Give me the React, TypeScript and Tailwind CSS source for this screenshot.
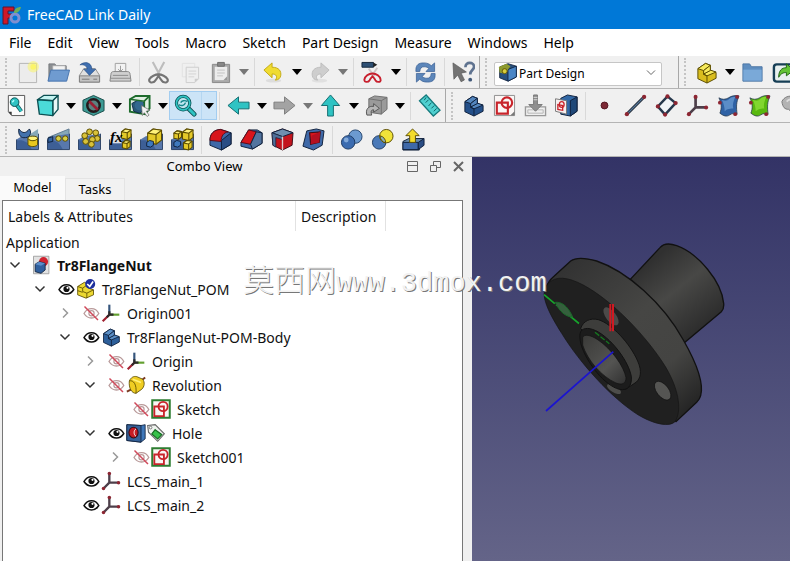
import type { ReactNode } from "react"

interface SvgProps {
  children: ReactNode
  size?: "md" | "sm"
}

function Svg({ children, size = "md" }: SvgProps) {
  return (
    <svg viewBox="0 0 24 24" className={size === "md" ? "size-[23px]" : "size-5"} aria-hidden="true">
      {children}
    </svg>
  )
}

const BLUE = "#3f69a8"
const NAVY = "#10203c"
const TEAL = "#2fc3c3"
const TEAL_DARK = "#0b4f52"
const YELLOW = "#f0dc32"
const OLIVE = "#5a4b00"
const RED = "#d8151c"

/* ---- file toolbar ---- */

const NewIcon = () => (
  <Svg>
    <path d="M3.500 2.500h18v20h-18z" fill="#ececec" stroke="#b5b5b5" />
    <circle cx="18" cy="6" r="6" fill="#fbf56a" opacity=".55" />
    <circle cx="18" cy="6" r="3" fill="#fbf56a" />
  </Svg>
)

const OpenIcon = () => (
  <Svg>
    <path d="M2 21V3h6l2 2h10v14" fill="#8c8f93" stroke="#75787c" />
    <path d="M6 5h13v8H6z" fill="#f2f2f2" stroke="#aaa" strokeWidth=".7" />
    <path d="M1 21 4 9.500h19.500L20.500 21z" fill="#6f9bd0" stroke="#4774ae" />
  </Svg>
)

const SaveIcon = () => (
  <Svg>
    <path d="M1.500 15 6 8h12l4.500 7v7h-21z" fill="#e0e0e0" stroke="#909090" />
    <path d="M1.500 15.500h21v6.500h-21z" fill="#c4c4c4" stroke="#808080" />
    <path d="M4 19h8M16 19h4" stroke="#777" />
    <path d="M2 4c5-4 12-3 12.500 4.500h4L12 15 6 8.500h3.500C9.500 5 6 3.500 2 4z" fill="#3f6fb0" stroke="#234a80" strokeWidth=".6" />
  </Svg>
)

const PrintIcon = () => (
  <Svg>
    <path d="M6.500 2.500h11v10h-11z" fill="#f2f2f2" stroke="#a0a0a0" />
    <path d="M12 5v6M9.500 8.500 12 11l2.500-2.500" stroke="#999" fill="none" />
    <path d="M2 14c0-2 1-3 3-3h14c2 0 3 1 3 3l1 7H1z" fill="#cfcfcf" stroke="#858585" />
    <path d="M4 15h16M1.500 18h21" stroke="#8a8a8a" />
  </Svg>
)

const CutIcon = () => (
  <Svg>
    <path d="M6 1l8 15M18 1l-8 15" stroke="#bdbdbd" strokeWidth="2.200" />
    <path d="M12 14c-3 0-8 2-9.500 5-1 3 2 4 4.500 3 2-1.500 3-4 5-6 2 2 3 4.500 5 6 2.500 1 5.500 0 4.500-3-1.500-3-6.500-5-9.500-5z" fill="none" stroke="#747474" strokeWidth="2.200" />
  </Svg>
)

const CopyIcon = () => (
  <Svg>
    <path d="M4.500 2.500h13v14h-13z" fill="#f0f0f0" stroke="#e2e2e2" />
    <path d="M8.500 6.500h13v12l-4 4h-9z" fill="#efefef" stroke="#cdcdcd" />
    <path d="M11 10.500h8M11 13.500h8M11 16.500h6" stroke="#d2d2d2" />
    <path d="M21.500 18.500h-4v4z" fill="#ccc" />
  </Svg>
)

const PasteIcon = () => (
  <Svg>
    <path d="M3.500 3.500h18v19h-18z" fill="#a9a9a9" stroke="#8a8a8a" />
    <path d="M6 6h13v14H6z" fill="#ececec" />
    <path d="M9 1.500h7v4H9z" fill="#888" stroke="#6d6d6d" />
    <path d="M8.500 9.500h8M8.500 12.500h8M8.500 15.500h6" stroke="#c2c2c2" />
    <path d="M19 16v4h-4z" fill="#999" />
  </Svg>
)

const UndoIcon = () => (
  <Svg>
    <ellipse cx="12" cy="20.500" rx="8" ry="2" fill="#ddd" />
    <path d="M2 9.500 10.500 2v4.500c7 0 10 4 9 9-.6 2.500-2 4-5.500 4.500 2.500-3.500 1-6.500-3.500-6.500v4z" fill={YELLOW} stroke="#c2a914" />
  </Svg>
)

const RedoIcon = () => (
  <Svg>
    <ellipse cx="12" cy="20.500" rx="8" ry="2" fill="#e0e0e0" />
    <path d="M22 9.500 13.500 2v4.500c-7 0-10 4-9 9 .6 2.500 2 4 5.500 4.500-2.500-3.500-1-6.500 3.500-6.500v4z" fill="#cecece" stroke="#bcbcbc" />
  </Svg>
)

const CutLinkIcon = () => (
  <Svg>
    <path d="M1 1.500h12v5H1z" fill="#2d4f73" stroke="#14263a" />
    <path d="M13 1.500l4 2.500-4 2.500z" fill="#222" />
    <path d="M8 8l6 8M17 7l-6 9" stroke="#cfc6c6" strokeWidth="2" />
    <path d="M12 13c-4 0-8 3-8.500 6.500-.2 3 4 3 5.500.5 1-2 2-3 3-4 1 1 2 2 3 4 1.500 2.500 6 2.500 5.500-.5C20 16 16 13 12 13z" fill="none" stroke="#c81f2d" strokeWidth="2" />
  </Svg>
)

const RefreshIcon = () => (
  <Svg>
    <path d="M2 11V9c0-5 3-7 8-7 4 0 6 1 8 3l3.500-3v9h-9l3-3.200C14 6.500 12.500 6 10.500 6 7.500 6 6.500 7.500 6 11z" fill="#5c86ba" stroke="#3c6297" strokeWidth=".8" />
    <path d="M22 13v2c0 5-3 7-8 7-4 0-6-1-8-3l-3.500 3v-9h9l-3 3.200c1.500 1.300 3 1.800 5 1.800 3 0 4-1.500 4.500-5z" fill="#5c86ba" stroke="#3c6297" strokeWidth=".8" />
  </Svg>
)

const WhatsThisIcon = () => (
  <Svg>
    <path d="M1 2l14 9.500-5.500 1.200 3.500 7-3.500 2-3.600-7L2 19z" fill="#737373" stroke="#565656" strokeWidth=".7" />
    <path d="M14 6.500C14 3.500 16 2 18.500 2S23 3.500 23 6c0 3.500-4 3.500-4 8" fill="none" stroke="#5f7390" strokeWidth="2.800" />
    <circle cx="19" cy="19.500" r="2" fill="#405878" />
  </Svg>
)

const WorkbenchIcon = () => (
  <Svg size="sm">
    <path d="M2 6 12 2l10 3v13l-10 5-10-4z" fill="#27507f" stroke={NAVY} />
    <path d="M12 9l10-4v13l-10 5z" fill="#4a86c6" stroke={NAVY} />
    <path d="M1 6l9-4 5 3-3 4-3 5-7-1z" fill="#8d9b2f" />
    <circle cx="8" cy="11" r="3" fill="#d8cf3e" stroke={OLIVE} />
  </Svg>
)

interface PartIconProps {
  fill: string
  light: string
  stroke: string
  size?: "md" | "sm"
}

const PartIcon = ({ fill, light, stroke, size }: PartIconProps) => (
  <Svg size={size}>
    <g stroke={stroke} strokeLinejoin="round">
      <path d="M3 8 11 2.500l5 2V10l6 2v6l-9.500 5L3 18.500z" fill={fill} />
      <path d="M3 8l8-5.500 5 2L9 10zM12.500 15.500 22 11.500 16 9.500l-7 4z" fill={light} />
      <path d="M9 10v4l3.500 1.500V23" fill="none" />
      <path d="M9 10l7-5.500V10l-7 3.500z" fill={light} />
    </g>
  </Svg>
)

const FolderIcon = () => (
  <Svg>
    <path d="M2 21V3h7l2 3h11v15z" fill="#5f8ec0" stroke="#4c76a4" />
    <path d="M2.500 9h19v11.500h-19z" fill="#7aa9d8" />
  </Svg>
)

const LinkGoIcon = () => (
  <Svg>
    <rect x="2" y="3.500" width="20" height="18" rx="3" fill="#e8f0ef" stroke="#163e55" strokeWidth="2.500" />
    <path d="M7 17c0-7 3-10 8-10V3l8 6.500-8 6V12c-3 0-6 1-8 5z" fill="#62c335" stroke="#1f6413" />
  </Svg>
)

/* ---- view toolbar ---- */

const FitAllIcon = () => (
  <Svg>
    <path d="M3.500 1.500h17v21H7l-3.500-4z" fill="#fbfbfb" stroke="#555" />
    <path d="M3.500 18.500 7 22.500v-4z" fill="#333" />
    <path d="M12 11l5 7" stroke={TEAL_DARK} strokeWidth="4" />
    <path d="M12 11l5 7" stroke={TEAL} strokeWidth="2.400" />
    <circle cx="10" cy="8.500" r="4.500" fill={TEAL} stroke={TEAL_DARK} />
    <path d="M7.500 8.500l2-2" stroke="#b5ffff" strokeWidth="1.500" />
  </Svg>
)

const CubeIcon = () => (
  <Svg>
    <g stroke={TEAL_DARK} strokeWidth="1.400" strokeLinejoin="round">
      <path d="M1.500 6 8 1.500h15L17.500 7z" fill="#c4f4f2" />
      <path d="M17.500 7 23 1.500V16l-5.500 6.500z" fill="#e8f8f7" />
      <path d="M1.500 6l16 1v15.500l-14-1.500z" fill="#4bdad8" />
    </g>
  </Svg>
)

const DrawStyleIcon = () => (
  <Svg>
    <path d="M1 6.500 12 1.500l11 5v11L12 22.500l-11-5z" fill="#3d9a94" stroke="#174a48" />
    <circle cx="12" cy="12" r="6.500" fill="#5b8280" stroke="#241a1c" strokeWidth="2.600" />
    <path d="M7.500 7.500l9 9" stroke="#9a1f33" strokeWidth="2.800" />
  </Svg>
)

const BoundBoxIcon = () => (
  <Svg>
    <path d="M2 5.500 8 2h14.500v13L18 21 2 18.500z" fill="#e0eee2" stroke="#1d6b2c" strokeWidth="2" />
    <path d="M4 10l5-3 8 2v8l-5 3-6-2z" fill="#2a5878" stroke="#12304a" />
    <circle cx="12" cy="12" r="5" fill="#33688f" />
    <path d="M2 5.500l15 2 5.500-5.500M17 7.500V21" fill="none" stroke="#1d6b2c" strokeWidth="1.700" />
    <path d="M14 12l9 5-4 1 3 4-2 1.500-3-4-2 3z" fill="#f3f3f3" stroke="#666" strokeWidth=".7" />
  </Svg>
)

const ZoomIcon = () => (
  <Svg>
    <path d="M13 13l8 8" stroke={TEAL_DARK} strokeWidth="5" strokeLinecap="round" />
    <path d="M13 13l8 8" stroke={TEAL} strokeWidth="3" strokeLinecap="round" />
    <circle cx="9.500" cy="9.500" r="7" fill="#bfe6f0" stroke={TEAL_DARK} strokeWidth="3.400" />
    <circle cx="9.500" cy="9.500" r="7" fill="none" stroke={TEAL} strokeWidth="1.800" />
    <path d="M5 11c3 2 6 1 7-2M14 8c-3-2-6-1-7 1" fill="none" stroke="#16878c" strokeWidth="1.500" />
  </Svg>
)

const LeftIcon = () => (
  <Svg>
    <path d="M1 12 12 3v5.500h11v7H12V21z" fill={TEAL} stroke="#126b6e" strokeLinejoin="round" />
  </Svg>
)

const RightIcon = () => (
  <Svg>
    <path d="M23 12 12 3v5.500H1v7h11V21z" fill="#a3a3a3" stroke="#7c7c7c" strokeLinejoin="round" />
  </Svg>
)

const UpIcon = () => (
  <Svg>
    <path d="M12 1 2.500 12H9v11h6V12h6.500z" fill={TEAL} stroke="#126b6e" strokeLinejoin="round" />
  </Svg>
)

const LinkedIcon = () => (
  <Svg>
    <path d="M4 5l6-3 13 1.500V16l-6 5-13-2z" fill="#9a9a9a" stroke="#6f6f6f" />
    <path d="M4 5l13 2 6-3.500M17 7v14" fill="none" stroke="#6f6f6f" />
    <path d="M2 22c-2-6 2-10 7-9v-3l6 5-6 4v-2.500c-3 0-3 2-2 5.500z" fill="#b5b5b5" stroke="#555" />
  </Svg>
)

const RulerIcon = () => (
  <Svg>
    <path d="M8.500 1 23 17l-7 6L1.500 7z" fill="#4fd0d0" stroke="#157a7d" strokeWidth="1.300" />
    <path d="M8.500 3.500l-2 3M11 6l-3 3M14 9l-3 3.500M17 12l-3 3M19.500 15l-3 3" stroke="#0f5f62" fill="none" />
  </Svg>
)

/* ---- part design helpers ---- */

const SketchIcon = ({ frame = "#8f8f8f", size }: { frame?: string; size?: "md" | "sm" }) => (
  <Svg size={size}>
    <path d="M1.500 1.500h21v21h-21z" fill="#faf6f5" stroke={frame} strokeWidth={size === "sm" ? 2.4 : 1} />
    <path d="M4 9h11.500v11.500H4z" fill="none" stroke="#c8242b" strokeWidth="2.200" />
    <circle cx="14.500" cy="9" r="5.500" fill="none" stroke="#c8242b" strokeWidth="2.200" />
    {size !== "sm" && <path d="M22.500 18v4.500H18z" fill="#777" />}
  </Svg>
)

const AttachIcon = () => (
  <Svg>
    <path d="M1.500 13.500h21v9h-21z" fill="#efefef" stroke="#999" strokeWidth="1.400" />
    <path d="M4 16.500h16v3.500H4z" fill="none" stroke="#b5b5b5" />
    <path d="M10 1h4v10h5l-7 7-7-7h5z" fill="#8f8f8f" stroke="#777" />
    <path d="M10 3.500h4M10 6h4" stroke="#ddd" />
  </Svg>
)

const MapSketchIcon = () => (
  <Svg>
    <path d="M6 4.500 13 1l10 2v15l-7 5-10-2z" fill="#3268a5" stroke={NAVY} />
    <path d="M16 7l7-4v15l-7 5z" fill="#1f4878" stroke={NAVY} />
    <path d="M.5 5 12 7v14L.5 18z" fill="#f6efef" stroke="#777" />
    <path d="M3 11l5 1v5l-5-1z" fill="none" stroke="#c8242b" strokeWidth="1.400" />
    <ellipse cx="7" cy="11" rx="2.500" ry="3" fill="none" stroke="#c8242b" strokeWidth="1.400" />
  </Svg>
)

const PointIcon = () => (
  <Svg>
    <circle cx="12" cy="12" r="3.600" fill="#7c2935" stroke="#521520" />
  </Svg>
)

const LineIcon = () => (
  <Svg>
    <path d="M3 21 21 3" stroke="#222b38" strokeWidth="3" />
    <path d="M3 21 21 3" stroke="#57799c" strokeWidth="1.200" />
    <circle cx="3" cy="21" r="2.200" fill="#8d2632" />
    <circle cx="21" cy="3" r="2.200" fill="#8d2632" />
  </Svg>
)

const PlaneIcon = () => (
  <Svg>
    <path d="M13 2.500 21.500 9.500 10.500 21.500 3 13z" fill="#f1f5f8" stroke="#26384c" strokeWidth="2.600" />
    <circle cx="13" cy="2.500" r="2.200" fill="#8d2632" />
    <circle cx="21.500" cy="9.500" r="2.200" fill="#8d2632" />
    <circle cx="10.500" cy="21.500" r="2.200" fill="#8d2632" />
    <circle cx="3" cy="13" r="2.200" fill="#8d2632" />
  </Svg>
)

const LcsIcon = ({ size }: { size?: "md" | "sm" }) => (
  <Svg size={size}>
    <path d="M10 2v12h12M10 14l-7 7" fill="none" stroke="#4d3f4a" strokeWidth="2.800" />
    <circle cx="10" cy="3" r="2.100" fill="#8d2632" />
    <circle cx="21" cy="14" r="2.100" fill="#8d2632" />
    <circle cx="3" cy="21" r="2.100" fill="#8d2632" />
  </Svg>
)

const BinderIcon = ({ fill, light }: { fill: string; light: string }) => (
  <Svg>
    <path d="M2 4c3 2 7 2 10 0s7-3 11-2c-3 6-3 12-2 19-3-1-5-1-8 1s-6 1-10-2c2-5 2-10-1-16z" fill={fill} stroke="#26384c" strokeWidth=".8" />
    <path d="M5 6c4 2 6 1 8-1s3-2 6-2c-2 5-3 8-2 12-5 0-7 1-9 3 0-4-1-8-3-12z" fill={light} opacity=".55" />
    <circle cx="3" cy="9" r="2" fill="#8d2632" />
    <circle cx="21" cy="3" r="2" fill="#8d2632" />
    <circle cx="19" cy="21" r="2" fill="#8d2632" />
  </Svg>
)

const CloneIcon = () => (
  <Svg>
    <path d="M3 8c2-5 8-7 13-5l6 5v10l-6 4c-4 0-3-5-6-6-4 0-6-2-7-8z" fill="#b3b3b3" stroke="#777" />
    <path d="M8 8c3-3 6-3 9 0v8" fill="none" stroke="#ddd" strokeWidth="2" />
  </Svg>
)

/* ---- transform features ---- */

const Slab = () => (
  <>
    <path d="M.500 12 6 8.500 23.500 6v16.500H.500z" fill="#5878ac" />
    <path d="M.500 13c7-1 12 1 16 9.500H.500z" fill="#3d5f96" />
    <path d="M.500 12v10.500h23V6" fill="none" stroke="#2c4266" />
  </>
)

const YellowBox = ({ x, y, s }: { x: number; y: number; s: number }) => (
  <g transform={`translate(${x} ${y}) scale(${s})`} stroke={OLIVE} strokeWidth={1.1 / s} strokeLinejoin="round">
    <path d="M0 3 4 0l6 1v7L6 11 0 9.500z" fill="#e4c929" />
    <path d="M0 3l4-3 6 1-4 3z" fill="#fff27a" />
    <path d="M6 4v7" fill="none" />
  </g>
)

const MirroredIcon = () => (
  <Svg>
    <Slab />
    <path d="M12 8 23 1v8l-9 3z" fill="#86a8b8" />
    <path d="M3 1c4 5 7 5 11 0 3 4 0 9-4 9-5 1-8-3-7-9z" fill="#4372ad" stroke={NAVY} />
    <ellipse cx="17.500" cy="11" rx="5" ry="2.500" fill="#fff27a" stroke={OLIVE} />
    <path d="M12.500 11v6.500c2 2.500 8 2.500 10 0V11c-2 3-8 3-10 0z" fill="#e9c81f" stroke={OLIVE} />
  </Svg>
)

const LinearPatternIcon = () => (
  <Svg>
    <path d="M1 10 23 1v10z" fill="#86a8b8" stroke="#5d7890" />
    <Slab />
    <path d="M1 10.500 6 9v5l-5 1z" fill="#3566a4" stroke={NAVY} />
    <circle cx="12" cy="11" r="2.800" fill="#d8cf45" stroke={OLIVE} />
    <circle cx="19" cy="11" r="2.800" fill="#d8cf45" stroke={OLIVE} />
  </Svg>
)

const PolarPatternIcon = () => (
  <Svg>
    <Slab />
    <g fill="#d8c23a" stroke={OLIVE}>
      <circle cx="12" cy="4" r="3" />
      <circle cx="18.500" cy="5" r="3" />
      <circle cx="7" cy="8" r="3" />
      <circle cx="20" cy="11" r="3" />
      <circle cx="8" cy="14" r="3" />
      <circle cx="15" cy="12" r="3" />
      <circle cx="14" cy="17" r="3" />
    </g>
  </Svg>
)

const MultiTransformIcon = () => (
  <Svg>
    <Slab />
    <path d="M1 3h12v13H1z" fill="#ececec" opacity=".9" />
    <YellowBox x={13} y={1} s={1} />
    <YellowBox x={14} y={13} s={0.8} />
    <text x="1" y="15" fontFamily="Liberation Serif" fontSize="16" fontStyle="italic" fontWeight="bold">
      fx
    </text>
  </Svg>
)

const ScaledIcon = () => (
  <Svg>
    <Slab />
    <YellowBox x={8} y={1} s={1.45} />
    <path d="M7 15l3-2 4 1v4l-3 2-4-1z" fill="#3f79bd" stroke={NAVY} />
  </Svg>
)

const PatternBoxesIcon = () => (
  <Svg>
    <Slab />
    <YellowBox x={3} y={3} s={0.8} />
    <YellowBox x={12} y={1} s={1.1} />
    <YellowBox x={13} y={13} s={0.9} />
    <path d="M3 15l3-2 4 1v4l-3 2-4-1z" fill="#3f79bd" stroke={NAVY} />
  </Svg>
)

const FilletIcon = () => (
  <Svg>
    <path d="M1 13C1 6 5 2 12 1.500L23 5v12l-10 6-12-5z" fill={BLUE} stroke={NAVY} />
    <path d="M13 13 23 5v12l-10 6z" fill="#2a4d84" stroke={NAVY} />
    <path d="M1 13C1 6 5 2 12 1.500l8 2.500c-5 1-7 4-7.500 10z" fill={RED} stroke="#5c0c18" />
  </Svg>
)

const ChamferIcon = () => (
  <Svg>
    <path d="M1 15 9 2h9l5 3v11l-10 6-12-3z" fill={BLUE} stroke={NAVY} />
    <path d="M1 15 9 2l8 2-6 13z" fill={RED} stroke="#5c0c18" />
    <path d="M11 17 17 4l6 1v11l-10 6z" fill="#52749f" stroke={NAVY} />
  </Svg>
)

const DraftIcon = () => (
  <Svg>
    <path d="M1 5l11-4 11 4-1 13-10 5-10-5z" fill="#c3141d" stroke="#3d0e18" />
    <path d="M1 5l11-4 11 4-11 4z" fill="#6f8fb0" stroke={NAVY} />
    <path d="M1 5l11 4v3l-7-2v10l-3-2z" fill="#4f6f98" stroke={NAVY} strokeWidth=".7" />
    <path d="M12 9v14" stroke="#dcc" strokeWidth="1.400" />
  </Svg>
)

const ThicknessIcon = () => (
  <Svg>
    <path d="M5 3l10-2 8 2-2 15-9 5L1 19z" fill={BLUE} stroke={NAVY} />
    <path d="M8 5l11-1-1 11-9 2z" fill={RED} stroke="#3d0e18" strokeWidth="1.200" />
    <path d="M9 17l1-9 9-4-1 11z" fill="#b51020" />
  </Svg>
)

const BooleanIcon = () => (
  <Svg>
    <circle cx="16" cy="9" r="7" fill="#6c9ad0" stroke="#23446e" />
    <circle cx="8.500" cy="15" r="7" fill="#3c6cb0" stroke="#1b3860" />
    <circle cx="6.500" cy="12.500" r="2.500" fill="#82a9d9" />
  </Svg>
)

const IntersectIcon = () => (
  <Svg>
    <circle cx="8.500" cy="15" r="7" fill="#4a79b8" stroke="#1b3860" />
    <circle cx="16" cy="8.500" r="7" fill="#f0e339" stroke={OLIVE} />
    <path d="M9.500 8.200A7 7 0 0 1 15.300 15.400 7 7 0 0 1 9.500 8.200z" fill="#8fb0b0" stroke={OLIVE} />
  </Svg>
)

const MigrateIcon = () => (
  <Svg>
    <path d="M1 14l6-3h16l-5 4v8H1z" fill="#6b8cab" stroke={NAVY} />
    <path d="M1 15h16v7.500H1z" fill={BLUE} stroke={NAVY} />
    <path d="M17 15l6-4v7l-6 4.500z" fill="#2a4d84" stroke={NAVY} />
    <path d="M11 1l7 7h-4v7H8V8H4z" fill="#f3dc2c" stroke={OLIVE} />
  </Svg>
)

/* ---- tree icons ---- */

const EyeIcon = () => (
  <svg viewBox="0 0 20 20" className="size-5" aria-label="visible">
    <path d="M3 10.500C5 7 7.500 5.700 10.500 5.700S16 7 17.800 10.500C16 13.500 13.500 15 10.500 15S5 13.700 3 10.500z" fill="#fff" stroke="#111" strokeWidth="1.500" />
    <circle cx="10.500" cy="10" r="3.100" fill="#111" />
    <circle cx="11.500" cy="8.800" r="1.100" fill="#fff" />
  </svg>
)

const HiddenIcon = () => (
  <svg viewBox="0 0 20 20" className="size-5" aria-label="hidden">
    <path d="M3 10.500C5 7 7.500 5.700 10.500 5.700S16 7 17.800 10.500C16 13.500 13.500 15 10.500 15S5 13.700 3 10.500z" fill="#fff" stroke="#b99a9a" strokeWidth="1.300" />
    <circle cx="10.500" cy="10.300" r="2.600" fill="none" stroke="#b99a9a" strokeWidth="1.200" />
    <path d="M3.500 3.500 17 17" stroke="#d0495a" strokeWidth="1.500" />
  </svg>
)

const DocumentIcon = () => (
  <Svg size="sm">
    <path d="M3 1.500h18.500v21H3z" fill="#e2e2e2" stroke="#999" />
    <circle cx="15" cy="8" r="5.500" fill="#cf2330" />
    <path d="M5 11l5-3 7 2v8l-5 4-7-2z" fill="#2f5f9e" stroke={NAVY} />
    <path d="M5 11l5-3 7 2-5 3z" fill="#5b8cc8" />
  </Svg>
)

const AssemblyIcon = () => (
  <Svg size="sm">
    <path d="M2 9l8-5 5 2v5l6 2v6l-9 4-10-4z" fill="#ecd832" stroke={OLIVE} />
    <path d="M2 9l6 2 7-5M8 11v4l5 2 8-4M13 17v6M2 14l6 2" fill="none" stroke={OLIVE} />
    <circle cx="17" cy="6" r="6" fill="#1d2f9e" />
    <path d="M13.500 6l3 3 4-6" fill="none" stroke="#fff" strokeWidth="2" />
  </Svg>
)

const OriginIcon = () => (
  <Svg size="sm">
    <path d="M10 2v12" stroke="#35557c" strokeWidth="2.600" />
    <path d="M10 14h12" stroke="#63a030" strokeWidth="2.600" />
    <path d="M10 14l-8 8" stroke="#a02030" strokeWidth="2.600" />
    <path d="M10 10v4h5M10 14l-3 3" fill="none" stroke="#2d2a2a" strokeWidth="2.600" />
  </Svg>
)

const RevolutionIcon = () => (
  <Svg size="sm">
    <path d="M1 20l6-3M18 7l5-4" stroke="#7b3b22" strokeWidth="2.400" />
    <path d="M4 7c2-4 5-6 9-5l7 3c3 4 2 9-1 12l-7 5c-5 0-9-6-8-15z" fill="#efcd22" stroke={OLIVE} />
    <path d="M4 7c5-1 9 4 8 15" fill="none" stroke={OLIVE} />
    <path d="M8 5l10 4" stroke="#fff07a" strokeWidth="2" />
  </Svg>
)

const HoleIcon = () => (
  <Svg size="sm">
    <path d="M1 2l17 1 5-1v17l-5 4-17-2z" fill="#3f78ba" stroke={NAVY} />
    <path d="M1 2l17 1v20L1 21z" fill="#35629a" stroke={NAVY} />
    <ellipse cx="9" cy="11.500" rx="5.500" ry="6.500" fill="#c81c24" stroke="#3b0d14" strokeWidth="1.300" />
    <path d="M12 7c-3 2-3 7 0 9" fill="none" stroke="#fff" strokeWidth="1.200" />
  </Svg>
)

const TagIcon = () => (
  <Svg size="sm">
    <path d="M2 3l9-1 11 11-8 9L3 11z" fill="#eef2ee" stroke="#666" strokeWidth="1.300" />
    <path d="M11 8l8 6-5 5-7-6z" fill="#37c24a" stroke="#156b22" strokeWidth="1.400" />
    <circle cx="5.500" cy="5.500" r="1.600" fill="#fff" stroke="#666" />
  </Svg>
)

/* ---- toolbar pieces ---- */

function ToolButton({ label, children }: { label: string; children: ReactNode }) {
  return (
    <button type="button" aria-label={label} className="flex h-8 w-[31px] shrink-0 items-center justify-center">
      {children}
    </button>
  )
}

function DropArrow({ label, disabled = false }: { label: string; disabled?: boolean }) {
  return (
    <button type="button" aria-label={label} disabled={disabled} className="flex h-8 w-[15px] shrink-0 items-center justify-center">
      <svg viewBox="0 0 10 6" className={disabled ? "h-1.5 w-2.5 text-[#777]" : "h-1.5 w-2.5 text-black"} aria-hidden="true">
        <path d="M0 0h10L5 6z" fill="currentColor" />
      </svg>
    </button>
  )
}

const Separator = () => (
  <div className="flex h-7 w-[7px] shrink-0 justify-center">
    <div className="w-px bg-[#d9d9d9]" />
  </div>
)

const Handle = () => (
  <div className="flex w-3 shrink-0 justify-center">
    <div className="h-7 border-l-2 border-dotted border-[#c4c4c4]" />
  </div>
)

const Divider = () => <div className="w-px shrink-0 self-stretch bg-[#a8a8a8]" />

const toolbarRow = "flex items-center overflow-hidden border-b border-[#b4b4b4] bg-[#f0f0f0]"

function FileToolbar() {
  return (
    <div role="toolbar" aria-label="File" className={`${toolbarRow} h-[33px]`}>
      <Handle />
      <ToolButton label="New"><NewIcon /></ToolButton>
      <ToolButton label="Open"><OpenIcon /></ToolButton>
      <ToolButton label="Save"><SaveIcon /></ToolButton>
      <ToolButton label="Print"><PrintIcon /></ToolButton>
      <Separator />
      <ToolButton label="Cut"><CutIcon /></ToolButton>
      <ToolButton label="Copy"><CopyIcon /></ToolButton>
      <ToolButton label="Paste"><PasteIcon /></ToolButton>
      <DropArrow label="Paste options" disabled />
      <Separator />
      <ToolButton label="Undo"><UndoIcon /></ToolButton>
      <DropArrow label="Undo history" />
      <ToolButton label="Redo"><RedoIcon /></ToolButton>
      <DropArrow label="Redo history" disabled />
      <Separator />
      <ToolButton label="Link actions"><CutLinkIcon /></ToolButton>
      <DropArrow label="More link actions" />
      <Separator />
      <ToolButton label="Refresh"><RefreshIcon /></ToolButton>
      <Separator />
      <ToolButton label="What's this?"><WhatsThisIcon /></ToolButton>
      <Divider />
      <Handle />
      <div className="relative mr-4 ml-0.5 h-6 w-[168px] shrink-0">
        <select aria-label="Workbench" defaultValue="Part Design" className="h-6 w-full appearance-none rounded-xs border border-[#c6c6c6] bg-white pl-6 text-[12px]">
          <option>Part Design</option>
        </select>
        <span className="pointer-events-none absolute top-0.5 left-1">
          <WorkbenchIcon />
        </span>
        <svg viewBox="0 0 10 6" className="pointer-events-none absolute top-2.5 right-1.5 h-1.5 w-2.5" aria-hidden="true">
          <path d="M1 .5 5 4.500 9 .5" fill="none" stroke="#666" />
        </svg>
      </div>
      <Divider />
      <Handle />
      <ToolButton label="Part"><PartIcon fill="#d9bd1e" light="#f7ea5c" stroke={OLIVE} /></ToolButton>
      <DropArrow label="More parts" />
      <ToolButton label="Group"><FolderIcon /></ToolButton>
      <ToolButton label="Make link"><LinkGoIcon /></ToolButton>
    </div>
  )
}

function ViewToolbar() {
  return (
    <div role="toolbar" aria-label="View" className={`${toolbarRow} h-[34px] pl-px`}>
      <ToolButton label="Fit all"><FitAllIcon /></ToolButton>
      <ToolButton label="Standard view"><CubeIcon /></ToolButton>
      <DropArrow label="Standard views" />
      <ToolButton label="Draw style"><DrawStyleIcon /></ToolButton>
      <DropArrow label="Draw styles" />
      <ToolButton label="Bounding box"><BoundBoxIcon /></ToolButton>
      <DropArrow label="Selection options" />
      <div className="flex h-[27px] shrink-0 items-center bg-[#cce4f7] outline outline-[#a3cdf0]">
        <ToolButton label="Sync view"><ZoomIcon /></ToolButton>
        <div className="h-[27px] border-l border-[#b5d6f0]">
          <div className="-ml-px flex h-[27px] items-center">
            <DropArrow label="Sync options" />
          </div>
        </div>
      </div>
      <Separator />
      <ToolButton label="Back"><LeftIcon /></ToolButton>
      <DropArrow label="Back history" />
      <ToolButton label="Forward"><RightIcon /></ToolButton>
      <DropArrow label="Forward history" disabled />
      <ToolButton label="Up"><UpIcon /></ToolButton>
      <DropArrow label="Parents" />
      <ToolButton label="Linked object"><LinkedIcon /></ToolButton>
      <DropArrow label="Linked objects" />
      <Separator />
      <ToolButton label="Measure"><RulerIcon /></ToolButton>
      <Divider />
      <Handle />
      <ToolButton label="Body"><PartIcon fill="#24508a" light="#5486be" stroke={NAVY} /></ToolButton>
      <ToolButton label="New sketch"><SketchIcon /></ToolButton>
      <ToolButton label="Attach sketch"><AttachIcon /></ToolButton>
      <ToolButton label="Map sketch"><MapSketchIcon /></ToolButton>
      <Separator />
      <ToolButton label="Datum point"><PointIcon /></ToolButton>
      <ToolButton label="Datum line"><LineIcon /></ToolButton>
      <ToolButton label="Datum plane"><PlaneIcon /></ToolButton>
      <ToolButton label="Coordinate system"><LcsIcon /></ToolButton>
      <ToolButton label="Shape binder"><BinderIcon fill="#2f62a5" light="#7fb0e4" /></ToolButton>
      <ToolButton label="Sub-shape binder"><BinderIcon fill="#58b80f" light="#a4ee4a" /></ToolButton>
      <ToolButton label="Clone"><CloneIcon /></ToolButton>
    </div>
  )
}

function FeatureToolbar() {
  return (
    <div role="toolbar" aria-label="Features" className={`${toolbarRow} h-[34px]`}>
      <Handle />
      <ToolButton label="Mirrored"><MirroredIcon /></ToolButton>
      <ToolButton label="Linear pattern"><LinearPatternIcon /></ToolButton>
      <ToolButton label="Polar pattern"><PolarPatternIcon /></ToolButton>
      <ToolButton label="Expression pattern"><MultiTransformIcon /></ToolButton>
      <ToolButton label="Scaled"><ScaledIcon /></ToolButton>
      <ToolButton label="Multi-transform"><PatternBoxesIcon /></ToolButton>
      <Separator />
      <ToolButton label="Fillet"><FilletIcon /></ToolButton>
      <ToolButton label="Chamfer"><ChamferIcon /></ToolButton>
      <ToolButton label="Draft"><DraftIcon /></ToolButton>
      <ToolButton label="Thickness"><ThicknessIcon /></ToolButton>
      <Separator />
      <ToolButton label="Boolean"><BooleanIcon /></ToolButton>
      <ToolButton label="Intersection"><IntersectIcon /></ToolButton>
      <ToolButton label="Migrate"><MigrateIcon /></ToolButton>
    </div>
  )
}

/* ---- model tree ---- */

interface TreeItem {
  label: string
  level: number
  icon: ReactNode
  open?: boolean
  visible?: boolean
  bold?: boolean
}

const items: TreeItem[] = [
  { label: "Tr8FlangeNut", level: 0, open: true, bold: true, icon: <DocumentIcon /> },
  { label: "Tr8FlangeNut_POM", level: 1, open: true, visible: true, icon: <AssemblyIcon /> },
  { label: "Origin001", level: 2, open: false, visible: false, icon: <OriginIcon /> },
  { label: "Tr8FlangeNut-POM-Body", level: 2, open: true, visible: true, icon: <PartIcon size="sm" fill="#2d5f9a" light="#5c8fc6" stroke={NAVY} /> },
  { label: "Origin", level: 3, open: false, visible: false, icon: <OriginIcon /> },
  { label: "Revolution", level: 3, open: true, visible: false, icon: <RevolutionIcon /> },
  { label: "Sketch", level: 4, visible: false, icon: <SketchIcon size="sm" frame="#2e7d32" /> },
  { label: "Hole", level: 3, open: true, visible: true, icon: <><HoleIcon /><TagIcon /></> },
  { label: "Sketch001", level: 4, open: false, visible: false, icon: <SketchIcon size="sm" frame="#2e7d32" /> },
  { label: "LCS_main_1", level: 2, visible: true, icon: <LcsIcon size="sm" /> },
  { label: "LCS_main_2", level: 2, visible: true, icon: <LcsIcon size="sm" /> },
]

const indents = ["pl-0", "pl-[25px]", "pl-[50px]", "pl-[75px]", "pl-[100px]"]

function TreeRow({ item }: { item: TreeItem }) {
  return (
    <li role="treeitem" aria-expanded={item.open} className={`flex h-6 items-center ${indents[item.level]}`}>
      <div className="mr-1 flex w-6 justify-center">
        {item.open !== undefined && (
          <button type="button" aria-label={item.open ? "Collapse" : "Expand"}>
            <svg viewBox="0 0 12 12" className="size-3" fill="none" strokeWidth="1.500" aria-hidden="true">
              {item.open ? <path d="M1.500 3.500 6 8l4.500-4.500" stroke="#333" /> : <path d="M4 1.500 8.500 6 4 10.500" stroke="#999" />}
            </svg>
          </button>
        )}
      </div>
      {item.visible !== undefined && (item.visible ? <EyeIcon /> : <HiddenIcon />)}
      {item.icon}
      <span className={item.bold ? "ml-1.5 font-bold" : "ml-1.5"}>{item.label}</span>
    </li>
  )
}

function ComboView() {
  return (
    <aside className="flex w-[472px] shrink-0 flex-col bg-[#f0f0f0]">
      <div className="flex h-[19px] items-center pr-2 pl-0.5">
        <h2 className="flex-1 text-center text-[13px]">Combo View</h2>
        <div className="flex gap-3 text-[#666]">
          <button type="button" aria-label="Minimize">
            <svg viewBox="0 0 11 11" className="size-[11px]" fill="none" stroke="currentColor"><path d="M.5.5h10v10H.5zM.5 4.500h10" /></svg>
          </button>
          <button type="button" aria-label="Float">
            <svg viewBox="0 0 11 11" className="size-[11px]" fill="none" stroke="currentColor"><path d="M.5 4.500h6v6h-6zM3.500 4.500v-4h7v6h-4" /></svg>
          </button>
          <button type="button" aria-label="Close">
            <svg viewBox="0 0 11 11" className="size-[11px]" fill="none" stroke="currentColor" strokeWidth="2"><path d="M1 1l9 9M10 1l-9 9" /></svg>
          </button>
        </div>
      </div>
      <div role="tablist" className="flex h-6 items-end text-[13px]">
        <button role="tab" aria-selected="true" type="button" className="h-6 w-[65px] bg-[#fafafa]">Model</button>
        <button role="tab" aria-selected="false" type="button" className="h-[22px] w-[60px] border border-b-0 border-[#e4e4e4] bg-[#f2f2f2]">Tasks</button>
      </div>
      <div className="mr-[9px] ml-0.5 flex-1 border border-b-0 border-[#777] bg-white text-[14px] text-[#111]">
        <div className="flex h-[30px]">
          <div className="flex w-[293px] items-center border-r border-[#e2e2e2] pl-[5px]">Labels &amp; Attributes</div>
          <div className="flex w-[90px] items-center border-r border-[#e2e2e2] pl-[5px]">Description</div>
        </div>
        <div className="flex h-[22px] items-center pl-[3px]">Application</div>
        <ul role="tree">
          {items.map((item) => (
            <TreeRow key={item.label} item={item} />
          ))}
        </ul>
      </div>
    </aside>
  )
}

/* ---- 3D view ---- */

function FlangeNut() {
  return (
    <svg viewBox="0 0 630 600" className="absolute top-[78px] left-[58px] h-[200px] w-[210px]" aria-label="Flange nut">
      <defs>
        <linearGradient id="barrel" x1="360" y1="80" x2="520" y2="280" gradientUnits="userSpaceOnUse">
          <stop offset="0" stopColor="#303030" />
          <stop offset=".45" stopColor="#484846" />
          <stop offset="1" stopColor="#2c2c2c" />
        </linearGradient>
        <linearGradient id="rim" x1="100" y1="90" x2="480" y2="520" gradientUnits="userSpaceOnUse">
          <stop offset="0" stopColor="#323232" />
          <stop offset=".45" stopColor="#464644" />
          <stop offset=".75" stopColor="#444442" />
          <stop offset="1" stopColor="#252525" />
        </linearGradient>
        <linearGradient id="bore" x1="160" y1="310" x2="290" y2="440" gradientUnits="userSpaceOnUse">
          <stop offset="0" stopColor="#3c3c3a" />
          <stop offset=".6" stopColor="#545452" />
          <stop offset="1" stopColor="#333" />
        </linearGradient>
      </defs>
      <path d="M298 136 390 38C400 26 418 24 440 32C505 55 575 140 581 205C582 215 580 224 574 230L462 324Z" fill="url(#barrel)" stroke="#111" strokeWidth="4" />
      <path d="M48 160C52 145 60 134 72 124L122 78C140 65 165 68 200 78C290 108 400 205 460 315C500 385 522 445 512 482C510 490 506 496 500 502L438 560Z" fill="url(#rim)" stroke="#111" strokeWidth="4" />
      <path d="M44 165C55 132 85 122 125 135C215 165 335 285 400 385C445 455 458 525 435 560C420 576 375 570 325 540C245 490 150 385 95 295C60 240 36 192 44 165Z" fill="#202020" stroke="#141414" strokeWidth="2" />
      <ellipse cx="243" cy="244" rx="32" ry="15" transform="rotate(52 243 244)" fill="#4c4a49" />
      <ellipse cx="398" cy="467" rx="33" ry="18" transform="rotate(52 398 467)" fill="#555553" stroke="#111" strokeWidth="2" />
      <ellipse cx="252" cy="462" rx="24" ry="10" transform="rotate(32 252 462)" fill="#4d4d4b" />
      <path d="M152 280C160 258 180 248 205 254C245 266 300 325 323 378C337 410 332 430 318 442L285 464Z" fill="#3d3d3b" stroke="#131313" strokeWidth="3" />
      <path d="M152 290C160 276 182 278 205 291C250 318 296 380 304 425C306 452 294 468 268 463C225 452 170 385 153 328C149 312 148 298 152 290Z" fill="#1c1c1c" stroke="#111" strokeWidth="3" />
      <path d="M158 308C162 296 182 300 203 314C245 342 282 395 288 428C288 446 276 451 258 444C215 425 172 375 158 330Z" fill="url(#bore)" stroke="#111" strokeWidth="2" />
      <path d="M42 179 150 268" stroke="#16a52b" strokeWidth="5" strokeDasharray="42 5" />
      <path d="M195 292 238 326" stroke="#15761f" strokeWidth="4" strokeDasharray="16 5" />
      <path d="M76 202C92 200 112 210 128 246C108 246 88 230 76 202Z" fill="#35603d" stroke="#1b6b2a" strokeWidth="3" />
      <path d="M241 207v82M249 207v82" stroke="#cf1a22" strokeWidth="6" />
      <path d="M48 528 250 350" stroke="#1b14cf" strokeWidth="5" />
    </svg>
  )
}

const menus = ["File", "Edit", "View", "Tools", "Macro", "Sketch", "Part Design", "Measure", "Windows", "Help"]

export default function App() {
  return (
    <div className="relative flex min-h-screen flex-col overflow-hidden bg-[#f0f0f0] font-['Noto_Sans','Open_Sans',sans-serif] text-black">
      <header className="flex h-[29px] items-center gap-[5px] bg-[#0078d7] pl-0.5 text-[14px] text-white">
        <svg viewBox="0 0 20 20" className="size-5" aria-hidden="true">
          <path d="M1 2h11v4H6v3h4v4H6v6H1z" fill="#cf1828" stroke="#5e1530" />
          <circle cx="13" cy="13" r="4" fill="none" stroke="#7f8fd0" strokeWidth="3" />
          <path d="M12 8c0-4 3-6 7-6-1 4-3 6-7 6z" fill="#6cae5c" />
        </svg>
        <h1>FreeCAD Link Daily</h1>
      </header>
      <nav className="flex h-[27px] items-center gap-4 bg-white pl-[9px] text-[14px]">
        {menus.map((menu) => (
          <button key={menu} type="button" className="whitespace-nowrap">
            {menu}
          </button>
        ))}
      </nav>
      <FileToolbar />
      <ViewToolbar />
      <FeatureToolbar />
      <div className="flex flex-1">
        <ComboView />
        <main className="relative flex-1 overflow-hidden bg-linear-to-b from-[#333366] to-[#646488]">
          <FlangeNut />
        </main>
      </div>
      <div className="pointer-events-none absolute top-[262px] left-[243px] flex items-baseline leading-8 whitespace-nowrap text-[#f2f2f2] text-shadow-[1px_1px_0_#777]">
        <span className="font-['Noto_Sans_CJK_SC',sans-serif] text-[31px] font-light">莫西网</span>
        <span className="font-['Liberation_Mono',monospace] text-[27px]">www.3dmox.com</span>
      </div>
    </div>
  )
}
